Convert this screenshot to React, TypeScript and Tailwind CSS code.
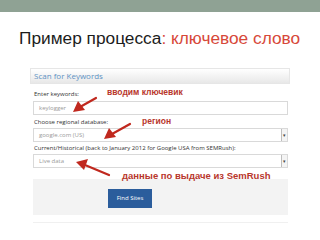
import React from "react";

function Select({ value }: { value: string }) {
  return (
    <div className="flex h-[14px] border border-[#d9d9d9] bg-white">
      <div className="flex-1 pl-[5px] text-[6px] leading-[12px] text-[#9a9a9a]">{value}</div>
      <div className="flex w-[6px] items-center justify-center border-l border-[#bdbdbd] bg-[#f4f4f4] text-[5px] leading-none text-[#444]">▾</div>
    </div>
  );
}

export default function App() {
  return (
    <div className="relative h-[240px] w-[320px] overflow-hidden bg-white" style={{ fontFamily: '"Liberation Sans", Arial, sans-serif' }}>
      <div className="h-[12px] bg-[#8fa294]" />
      <div className="mt-[15px] pl-[19px] text-[17.3px] leading-[22px] text-[#1c1c1c]">
        Пример процесса<span className="text-[#d7483a]">: ключевое слово</span>
      </div>

      <div className="ml-[30px] mt-[19px] w-[260px]" style={{ fontFamily: '"Open Sans", sans-serif' }}>
        <div className="h-[16px] border border-[#e6e6e6] bg-gradient-to-b from-[#ffffff] to-[#e8e8e8] pl-[3px] text-[8px] leading-[14px] text-[#5f92c3]">
          Scan for Keywords
        </div>
        <div className="pl-[3px] pr-[2px]">
          <div className="mt-[5px] h-[10px] pl-[1px] text-[6px] leading-[10px] text-[#333]">Enter keywords:</div>
          <div className="mt-[2px] h-[14px] border border-[#d9d9d9] pl-[5px] text-[6px] leading-[12px] text-[#9a9a9a]">keylogger</div>
          <div className="mt-[2px] h-[10px] pl-[1px] text-[6px] leading-[10px] text-[#333]">Choose regional database:</div>
          <div className="mt-[1px]">
            <Select value="google.com (US)" />
          </div>
          <div className="mt-[1px] h-[10px] pl-[1px] text-[6px] leading-[10px] text-[#333]">
            Current/Historical (back to January 2012 for Google USA from SEMRush):
          </div>
          <div className="mt-[1px]">
            <Select value="Live data" />
          </div>
          <div className="mt-[11px] h-[36px] bg-[#f3f3f3] pl-[75px] pt-[10px]">
            <div className="flex h-[19px] w-[44px] items-center justify-center bg-[#2b5d9c] text-[6px] text-white">Find Sites</div>
          </div>
          <div className="mt-[7px] h-px bg-[#f0f0f0]" />
        </div>
      </div>

      <div className="absolute left-[107px] top-[87px] text-[8.5px] font-bold leading-[11px] text-[#b8362c]">вводим ключевик</div>
      <div className="absolute left-[142px] top-[116px] text-[8.5px] font-bold leading-[11px] text-[#b8362c]">регион</div>
      <div className="absolute left-[122px] top-[170px] text-[9.5px] font-bold leading-[11px] text-[#b8362c]">данные по выдаче из SemRush</div>

      <svg className="absolute left-0 top-0" width="320" height="240" viewBox="0 0 320 240">
        <g stroke="#c0281e" strokeWidth="2.2" fill="#c0281e" strokeLinecap="round">
          <line x1="96" y1="98" x2="80" y2="107" />
          <polygon points="73,112 78,101 85,110" stroke="none" />
          <line x1="130" y1="124" x2="112" y2="134" />
          <polygon points="104,139 109,128 116,137" stroke="none" />
          <line x1="109" y1="175" x2="85" y2="165" />
          <polygon points="76,162 88,159 84,170" stroke="none" />
        </g>
      </svg>
    </div>
  );
}
